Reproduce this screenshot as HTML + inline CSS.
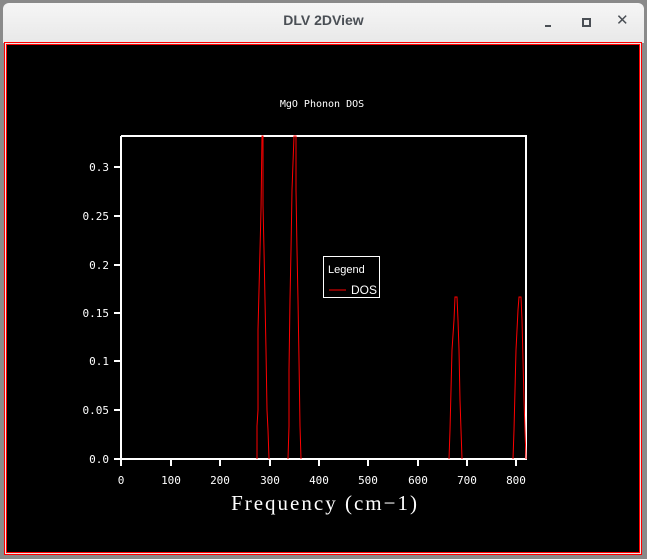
<!DOCTYPE html>
<html><head><style>
html,body{margin:0;padding:0;width:647px;height:559px;overflow:hidden;background:#9a9a9a;}
.tb{position:absolute;left:3px;top:3px;width:641px;height:40px;background:linear-gradient(#f6f6f6,#e8e8e8);border-radius:6px 6px 0 0;}
.title{position:absolute;left:0;width:647px;top:12px;text-align:center;font:bold 14px "Liberation Sans",sans-serif;color:#4a4f55;}
</style></head><body>
<div style="position:absolute;left:0;top:0;width:647px;height:559px;background:#8a8a8a"></div>
<div class="tb"></div>
<div class="title">DLV 2DView</div>
<div style="position:absolute;left:545px;top:25px;width:6px;height:2px;background:#4a4f55"></div>
<div style="position:absolute;left:582px;top:18px;width:5px;height:5px;border:2px solid #4a4f55"></div>
<div style="position:absolute;left:616px;top:11px;font:bold 15px 'DejaVu Sans',sans-serif;color:#4a4f55">✕</div>
<div style="position:absolute;left:4px;top:42px;width:636px;height:511px;border:1px solid #f00;background:#e8e8e8"></div>
<div style="position:absolute;left:6px;top:44px;width:632px;height:507px;border:1px solid #f00;background:#000"></div>
<svg width="647" height="559" style="position:absolute;left:0;top:0" font-family="DejaVu Sans Mono,Liberation Mono,monospace">
<text x="322" y="107" fill="#fff" font-size="10" text-anchor="middle">MgO Phonon DOS</text>
<g stroke="#fff" stroke-width="2" fill="none">
<path d="M121,136 H526 V459 M121,136 V459 H527"/>
</g>
<g stroke="#fff" stroke-width="2">
<path d="M114,459H121M114,410H121M114,361H121M114,313H121M114,265H121M114,216H121M114,167H121"/>
<path d="M121,459V466M171,459V466M220,459V466M270,459V466M319,459V466M368,459V466M418,459V466M467,459V466M516,459V466"/>
</g>
<g fill="#fff" font-size="11" text-anchor="end">
<text x="109" y="463">0.0</text><text x="109" y="414">0.05</text><text x="109" y="365">0.1</text>
<text x="109" y="317">0.15</text><text x="109" y="269">0.2</text><text x="109" y="220">0.25</text><text x="109" y="171">0.3</text>
</g>
<g fill="#fff" font-size="11" text-anchor="middle">
<text x="121" y="484">0</text><text x="171" y="484">100</text><text x="220" y="484">200</text><text x="270" y="484">300</text>
<text x="319" y="484">400</text><text x="368" y="484">500</text><text x="418" y="484">600</text><text x="467" y="484">700</text><text x="516" y="484">800</text>
</g>
<text x="325" y="510" fill="#fff" font-size="21" letter-spacing="2" font-family="Liberation Serif,serif" text-anchor="middle">Frequency (cm−1)</text>
<g stroke="#f00" stroke-width="1" fill="none">
<polyline points="257,459 257,426 258,410 258,330 259,290 260,250 261,210 262,136 263,136 263,205 264,250 265,300 266,350 267,410 268,430 269,459"/>
<polyline points="288,459 289,426 289,370 290,300 291,250 292,190 294,136 296,136 296,190 297,250 298,300 299,360 300,426 301,459"/>
<polyline points="449,459 450,430 451,390 452,350 454,320 455,297 457,297 458,320 459,350 460,400 461,430 462,459"/>
<polyline points="513,459 514,430 515,390 516,350 518,310 519,297 521,297 522,320 523,360 524,400 525,430 526,459"/>
</g>
<rect x="323.5" y="256.5" width="56" height="41" stroke="#fff" fill="#000"/>
<text x="328" y="273" fill="#fff" font-size="11" font-family="Liberation Sans,sans-serif">Legend</text>
<line x1="329" y1="290" x2="346" y2="290" stroke="#f00"/>
<text x="351" y="294" fill="#fff" font-size="12" font-family="Liberation Sans,sans-serif">DOS</text>
</svg>
</body></html>
